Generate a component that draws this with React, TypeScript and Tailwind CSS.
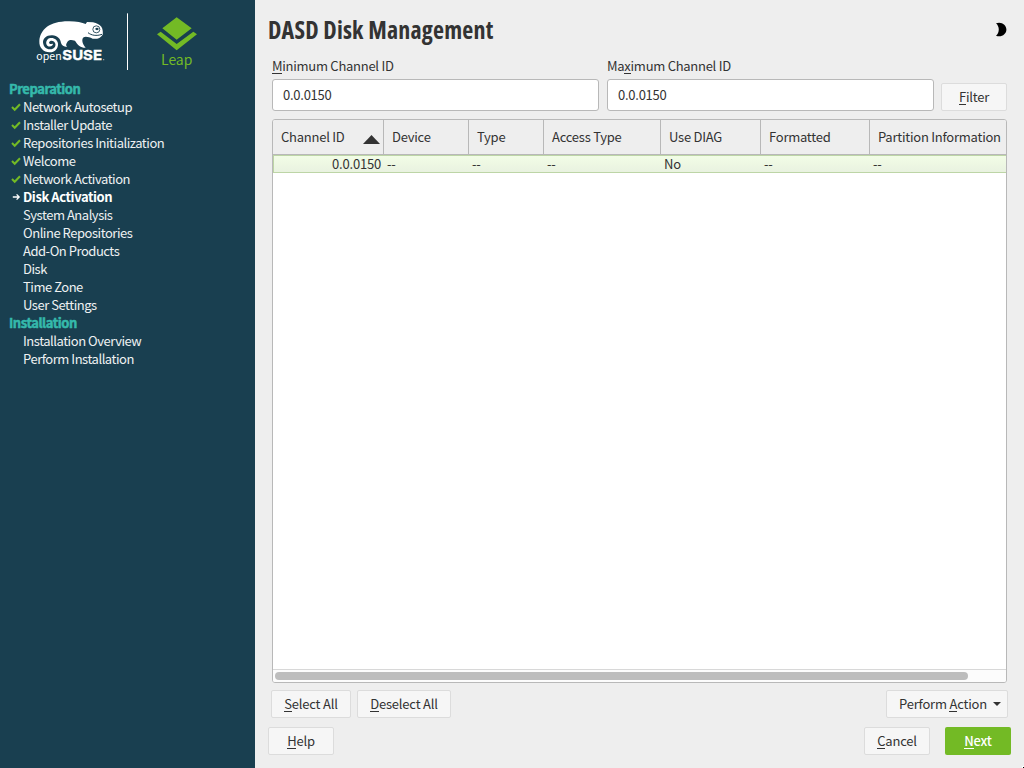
import React from "react";

const FONT = "font-['Noto_Sans_CJK_SC','Liberation_Sans',sans-serif]";

type Step = { label: string; state?: "done" | "current" };

const preparation: Step[] = [
  { label: "Network Autosetup", state: "done" },
  { label: "Installer Update", state: "done" },
  { label: "Repositories Initialization", state: "done" },
  { label: "Welcome", state: "done" },
  { label: "Network Activation", state: "done" },
  { label: "Disk Activation", state: "current" },
  { label: "System Analysis" },
  { label: "Online Repositories" },
  { label: "Add-On Products" },
  { label: "Disk" },
  { label: "Time Zone" },
  { label: "User Settings" },
];
const installation: Step[] = [{ label: "Installation Overview" }, { label: "Perform Installation" }];

function Logo() {
  return (
    <svg className="block h-20 w-[255px] shrink-0" viewBox="0 0 765 240">
      <path
        fill="#fff"
        d="M118 124C120 88 150 63 208 64C230 64 246 68 257 72L261 66L279 67C290 69 299 74 304 80C309 87 309 98 308 104C302 114 291 118 278 116C266 111 256 108 249 113C244 122 249 133 257 143C244 144 233 136 225 122C213 119 207 119 202 126C198 132 197 136 201 141C191 140 185 136 183 129C182 117 172 107 157 106C139 105 129 116 129 127C130 141 140 149 151 148C162 147 168 140 166 131C164 124 157 121 151 123C146 125 146 131 151 132C155 132 156 130 159 132C158 139 149 142 142 137C136 131 138 119 148 115C160 111 173 119 174 131C175 147 162 158 149 157C130 157 117 143 118 124Z"
      />
      <circle cx="289" cy="88" r="10.5" fill="none" stroke="#193f50" strokeWidth="2.6" />
      <ellipse cx="291" cy="87" rx="5" ry="3.5" fill="#193f50" />
      <path d="M264 98C274 106 289 109 306 103" fill="none" stroke="#193f50" strokeWidth="3" />
      <text x="109" y="181" fill="#fff" className="font-['Noto_Sans_CJK_SC',sans-serif] text-[30px]" textLength="76" lengthAdjust="spacingAndGlyphs">open</text>
      <text x="187" y="181" fill="#fff" stroke="#fff" strokeWidth="1" className="font-['Inter',sans-serif] text-[40px] font-bold" textLength="119" lengthAdjust="spacingAndGlyphs">SUSE</text>
      <circle cx="311" cy="179" r="2" fill="#a3b2b9" />
      <rect x="381" y="40" width="3" height="170" fill="#fff" />
      <path fill="#73ba25" d="M530 52L575 85L530 119L487 85ZM482 95L530 132L580 95L591 103L530 151L471 103Z" />
      <text x="483" y="195" fill="#73ba25" className="font-['Noto_Sans_CJK_SC',sans-serif] text-[42px] font-normal" textLength="94" lengthAdjust="spacingAndGlyphs">Leap</text>
    </svg>
  );
}

function StepRow({ step }: { step: Step }) {
  return (
    <li className="flex h-[18px] items-center">
      <span className="flex w-[14px] shrink-0">
        {step.state === "done" && (
          <svg className="ml-[2px] h-[9px] w-[10px]" viewBox="0 0 10 9">
            <path d="M1 4.1L3.7 6.7L9 1.3" fill="none" stroke="#73ba25" strokeWidth="2.1" />
          </svg>
        )}
        {step.state === "current" && (
          <svg className="ml-[3px] h-[8px] w-[9px]" viewBox="0 0 9 8">
            <path d="M.8 4H7M4.6 1.4L7.2 4L4.6 6.6" fill="none" stroke="#fff" strokeWidth="1.3" />
          </svg>
        )}
      </span>
      <span className={step.state === "current" ? "font-bold tracking-[-0.42px] text-white" : "tracking-[-0.47px] text-[#eef1f2]"}>{step.label}</span>
    </li>
  );
}

function Mnemonic({ text, at = 0 }: { text: string; at?: number }) {
  return (
    <span className="whitespace-pre">
      {text.slice(0, at)}
      <span className="inline-block h-[17px] border-b border-current leading-[18px]">{text[at]}</span>
      {text.slice(at + 1)}
    </span>
  );
}

function Button({ text, at, className = "", children }: { text: string; at?: number; className?: string; children?: React.ReactNode }) {
  return (
    <button className={`flex h-7 shrink-0 items-center justify-center rounded-[2px] border border-[#dcdcdc] bg-[#f6f6f6] tracking-[-0.2px] ${className}`}>
      <Mnemonic text={text} at={at} />
      {children}
    </button>
  );
}

const columns = [
  { title: "Channel ID", value: "0.0.0150", width: "w-[111px]" },
  { title: "Device", value: "--", width: "w-[85px]" },
  { title: "Type", value: "--", width: "w-[75px]" },
  { title: "Access Type", value: "--", width: "w-[117px]" },
  { title: "Use DIAG", value: "No", width: "w-[100px]" },
  { title: "Formatted", value: "--", width: "w-[109px]" },
  { title: "Partition Information", value: "--", width: "w-[136px]" },
];

function Field({ label, at }: { label: string; at: number }) {
  return (
    <label className="flex w-[327px] flex-col">
      <span className="h-[22px] leading-[18px] tracking-[-0.27px]"><Mnemonic text={label} at={at} /></span>
      <input className="h-8 w-full rounded-[3px] border border-[#b8b8b8] bg-white px-[10px] pb-[2px] tracking-[-0.25px] outline-none" defaultValue="0.0.0150" />
    </label>
  );
}

export default function App() {
  return (
    <div className={`relative flex h-[768px] w-[1024px] overflow-hidden bg-[#eeeeee] text-[13px] leading-[18px] text-[#333] ${FONT}`}>
      <aside className="w-[255px] shrink-0 bg-[#193f50]">
        <Logo />
        <nav className="pl-[9px]">
          <h2 className="h-[18px] font-bold tracking-[-0.44px] text-[#35b9ab] [-webkit-text-stroke:0.5px_#35b9ab]">Preparation</h2>
          <ul>{preparation.map((s) => <StepRow key={s.label} step={s} />)}</ul>
          <h2 className="h-[18px] font-bold tracking-[-0.44px] text-[#35b9ab] [-webkit-text-stroke:0.5px_#35b9ab]">Installation</h2>
          <ul>{installation.map((s) => <StepRow key={s.label} step={s} />)}</ul>
        </nav>
      </aside>

      <main className="flex min-w-0 flex-1 flex-col">
        <header className="flex h-[57px] items-center justify-between pr-[17px] pl-[13px]">
          <h1 className="pt-[3px] font-['Open_Sans',sans-serif] text-[24px] leading-[32px] font-bold tracking-[0.2px] [font-stretch:75%]">DASD Disk Management</h1>
          <svg className="mt-[2px] h-[15px] w-[12px]" viewBox="0 0 12 15">
            <path d="M1 1.2C6.5 -.8 11.4 2.8 11.4 7.5S6.5 15.8 1 13.8C4.7 10.5 4.7 4.5 1 1.2Z" fill="#000" />
          </svg>
        </header>

        <section className="flex h-[54px] items-end pl-[17px]">
          <Field label="Minimum Channel ID" at={0} />
          <div className="w-2" />
          <Field label="Maximum Channel ID" at={2} />
          <Button text="Filter" className="ml-[7px] w-[66px]" />
        </section>

        <section className="mt-2 ml-[17px] flex h-[564px] w-[735px] flex-col overflow-hidden rounded-[3px] border border-[#b8b8b8] bg-white">
          <div className="flex h-[35px] border-b border-[#b8b8b8] bg-[#eeeeee] tracking-[-0.24px]">
            {columns.map((c, i) => (
              <div key={c.title} className={`flex shrink-0 items-center justify-between border-[#b8b8b8] pl-2 whitespace-nowrap ${i < 6 ? "border-r" : ""} ${c.width}`}>
                {c.title}
                {i === 0 && (
                  <svg className="mt-1 mr-[3px] h-[9px] w-[17px]" viewBox="0 0 17 9"><path d="M0 9L8.5 0L17 9Z" fill="#333" /></svg>
                )}
              </div>
            ))}
          </div>
          <div className="flex h-[18px] border border-r-0 border-[#bdd5a6] bg-linear-to-b from-[#f2fde6] to-[#e9f2e0] leading-[15px] tracking-[-0.2px]">
            {columns.map((c, i) => (
              <div key={c.title} className={`shrink-0 ${i === 0 ? "-ml-px pr-[3px] text-right" : "pl-[3px]"} ${c.width}`}>{c.value}</div>
            ))}
          </div>
          <div className="flex-1" />
          <div className="h-[13px] border-t border-[#d8d8d8] bg-[#fcfcfc] px-[2px] pt-[2px]">
            <div className="h-2 w-[693px] rounded-full bg-[#bdbdbd]" />
          </div>
        </section>

        <section className="mt-[7px] flex h-7 pr-4 pl-4">
          <Button text="Select All" className="w-20" />
          <Button text="Deselect All" className="ml-[6px] w-[94px]" />
          <Button text="Perform Action" at={8} className="ml-auto w-[122px] pl-[6px]">
            <svg className="ml-[6px] h-[4px] w-[8px]" viewBox="0 0 8 4"><path d="M0 0H8L4 4Z" fill="#333" /></svg>
          </Button>
        </section>

        <footer className="mt-[9px] flex h-7 pr-[13px] pl-[13px]">
          <Button text="Help" className="w-[66px]" />
          <Button text="Cancel" className="ml-auto w-[66px]" />
          <button className="ml-[15px] flex h-7 w-[66px] items-center justify-center rounded-[2px] bg-[#73ba25] font-medium tracking-[-0.2px] text-white">
            <Mnemonic text="Next" />
          </button>
        </footer>
      </main>
      <div className="absolute right-0 bottom-0 h-[2px] w-[2px] bg-white">
        <div className="ml-px h-px w-px translate-y-px bg-black" />
      </div>
    </div>
  );
}
